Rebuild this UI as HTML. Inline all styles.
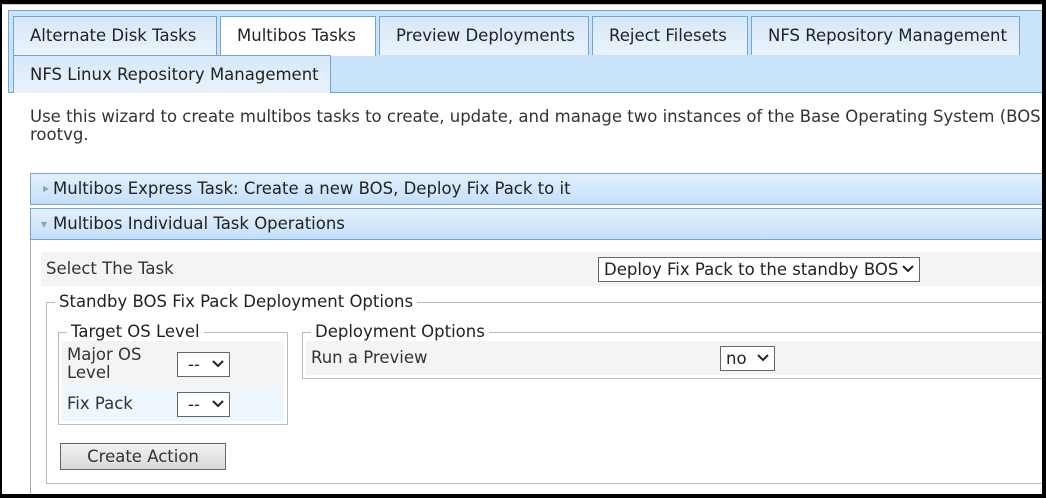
<!DOCTYPE html>
<html><head><style>
*{box-sizing:border-box;margin:0;padding:0}
body{width:1046px;height:498px;background:#000;position:relative;overflow:hidden;font-family:"DejaVu Sans","Liberation Sans",sans-serif;font-size:16.5px;color:#222}
.a{position:absolute}
.page{left:2px;top:4px;width:1040px;height:490px;background:#fff;border-top:1px solid #ccc}
.tabbox{left:8px;top:10px;width:1034px;height:83px;background:#c9e3fb;border:1px solid #7aa3cc;border-right:none}
.tab{height:39px;border:1px solid #7aa3cc;border-bottom:none;background:linear-gradient(#d6e7f8,#eaf3fc);line-height:38px;padding-left:16px;white-space:nowrap}
.acc{left:30px;width:1012px;height:32px;border:1px solid #7aa3cc;border-right:none;background:linear-gradient(#e3f0fd,#c4dff9);line-height:30px;padding-left:22px}
.fs{border:1px solid #bbb}
.lg{background:#fff;padding:0 4px;line-height:18px;white-space:nowrap}
.sel{border:1px solid #666;background:#fff;height:25px;line-height:23px;padding-left:5px;white-space:nowrap}
.chev{position:absolute;right:4px;top:5px;width:14px;height:12px}
</style></head><body>
<div class="a page"></div>
<div class="a tabbox"></div>
<div class="a tab" style="left:13px;top:16px;width:204px">Alternate Disk Tasks</div>
<div class="a tab" style="left:220px;top:16px;width:156px;background:#fff;height:40px">Multibos Tasks</div>
<div class="a tab" style="left:379px;top:16px;width:210px">Preview Deployments</div>
<div class="a tab" style="left:592px;top:16px;width:156px">Reject Filesets</div>
<div class="a tab" style="left:751px;top:16px;width:269px">NFS Repository Management</div>
<div class="a tab" style="left:13px;top:55px;width:318px;height:38px;background:linear-gradient(#d6e7f8,#eaf3fc)">NFS Linux Repository Management</div>
<div class="a" style="left:30px;top:108px;width:1012px;overflow:hidden;line-height:18px;white-space:nowrap;color:#333">Use this wizard to create multibos tasks to create, update, and manage two instances of the Base Operating System (BOS<br>rootvg.</div>
<div class="a acc" style="top:173px"><span class="a" style="left:12px;top:0;font-size:8px;color:#8aa">&#9654;</span>Multibos Express Task: Create a new BOS, Deploy Fix Pack to it</div>
<div class="a acc" style="top:208px"><span class="a" style="left:10px;top:1px;font-size:8px;color:#8aa">&#9660;</span>Multibos Individual Task Operations</div>
<div class="a" style="left:30px;top:240px;width:1px;height:254px;background:#aab"></div>
<div class="a" style="left:41px;top:252px;width:1001px;height:34px;background:#f4f4f4;line-height:34px;padding-left:5px;color:#333">Select The Task</div>
<div class="a sel" style="left:598px;top:257px;width:322px">Deploy Fix Pack to the standby BOS<svg class="chev" viewBox="0 0 14 12" style="background:#fff"><path d="M2 3l5 5 5-5" stroke="#222" stroke-width="2" fill="none"/></svg></div>
<div class="a fs" style="left:46px;top:302px;width:1010px;height:182px"></div>
<div class="a lg" style="left:55px;top:293px">Standby BOS Fix Pack Deployment Options</div>
<div class="a fs" style="left:58px;top:332px;width:230px;height:93px"></div>
<div class="a lg" style="left:67px;top:323px">Target OS Level</div>
<div class="a" style="left:62px;top:341px;width:222px;height:46px;background:#f4f4f4"></div>
<div class="a" style="left:62px;top:387px;width:222px;height:34px;background:#eef6fe"></div>
<div class="a" style="left:67px;top:346px;line-height:18px;color:#333">Major OS<br>Level</div>
<div class="a" style="left:67px;top:395px;line-height:18px;color:#333">Fix Pack</div>
<div class="a sel" style="left:177px;top:352px;width:53px;padding-left:10px">--<svg class="chev" viewBox="0 0 14 12"><path d="M2 3l5 5 5-5" stroke="#222" stroke-width="2" fill="none"/></svg></div>
<div class="a sel" style="left:177px;top:392px;width:53px;padding-left:10px">--<svg class="chev" viewBox="0 0 14 12"><path d="M2 3l5 5 5-5" stroke="#222" stroke-width="2" fill="none"/></svg></div>
<div class="a fs" style="left:302px;top:332px;width:760px;height:47px"></div>
<div class="a lg" style="left:311px;top:323px">Deployment Options</div>
<div class="a" style="left:306px;top:341px;width:736px;height:34px;background:#f4f4f4;line-height:34px;padding-left:5px;color:#333">Run a Preview</div>
<div class="a sel" style="left:720px;top:346px;width:55px">no<svg class="chev" viewBox="0 0 14 12"><path d="M2 3l5 5 5-5" stroke="#222" stroke-width="2" fill="none"/></svg></div>
<div class="a" style="left:60px;top:443px;width:166px;height:27px;border:1px solid #666;background:linear-gradient(#f2f2f2,#d8d8d8);text-align:center;line-height:25px;color:#333">Create Action</div>
<div class="a" style="left:1042px;top:0;width:4px;height:498px;background:#000"></div>
</body></html>
